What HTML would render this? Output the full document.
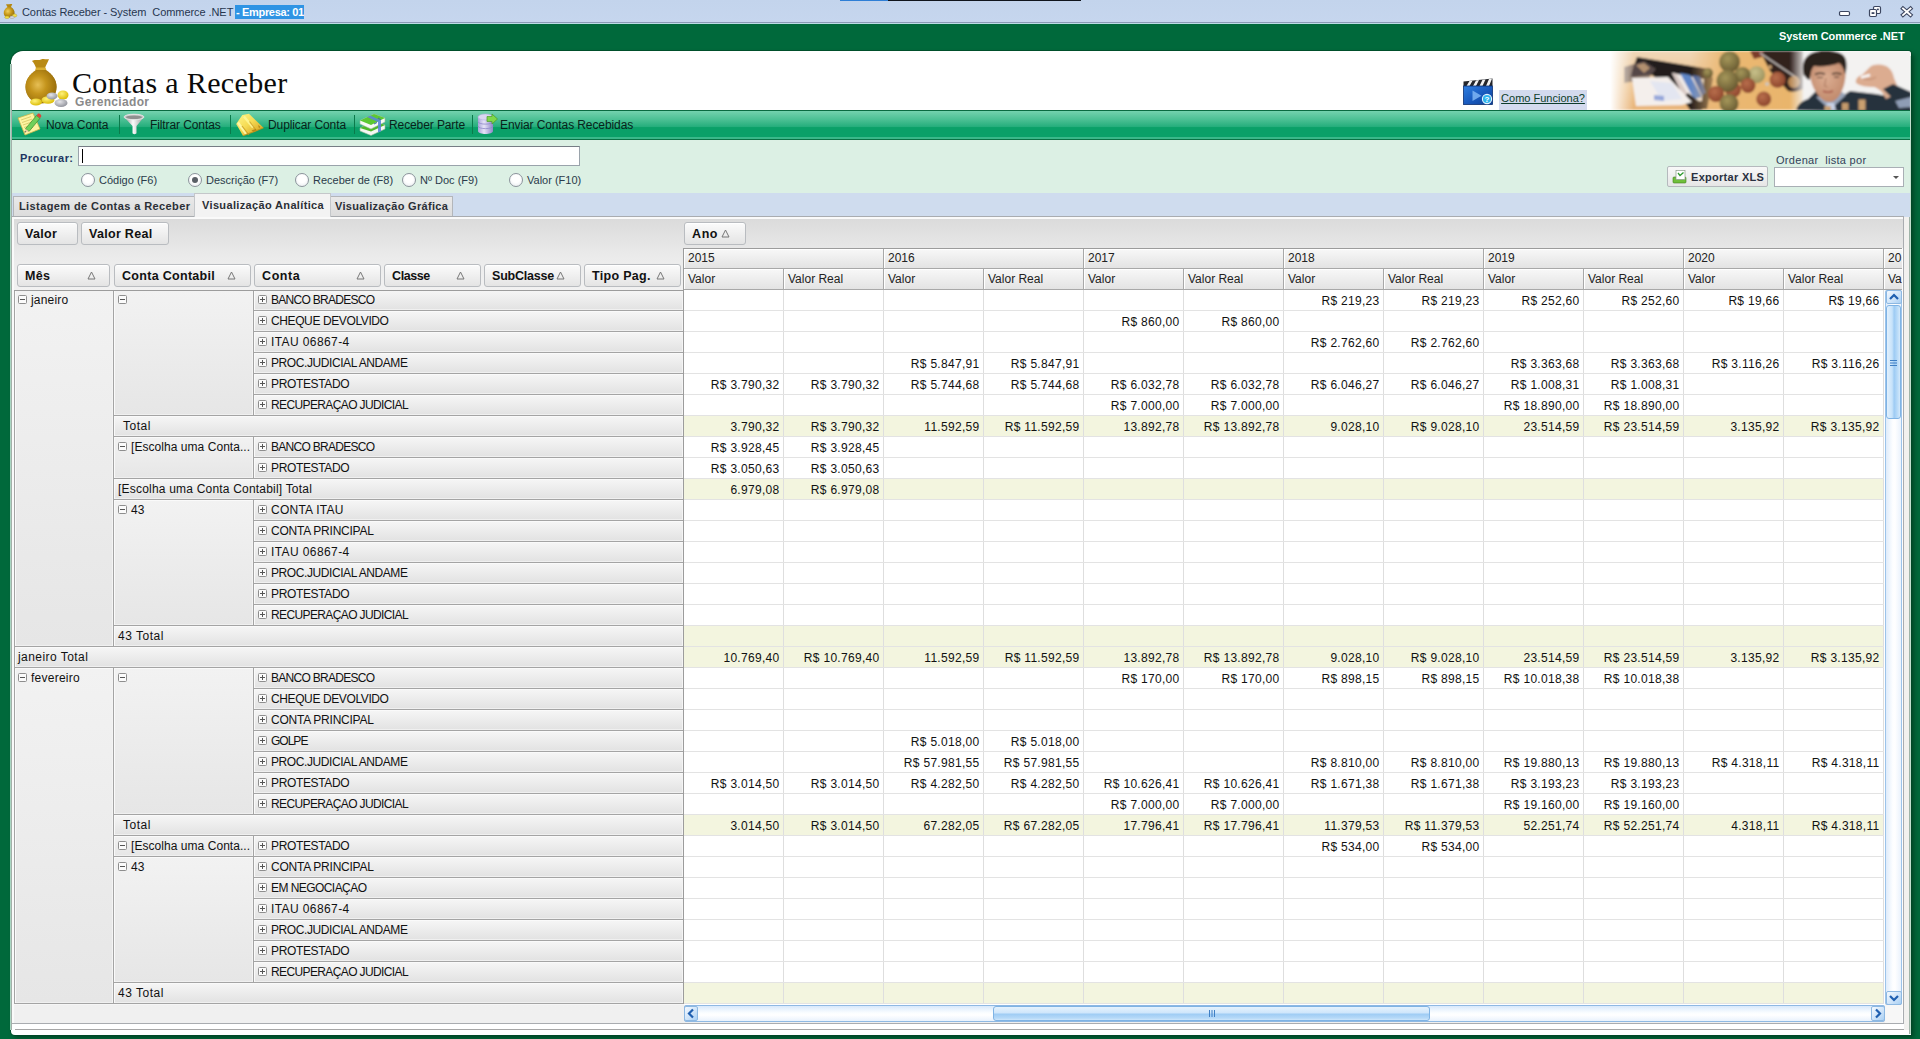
<!DOCTYPE html>
<html lang="pt-BR">
<head>
<meta charset="utf-8">
<title>Contas Receber - System Commerce .NET</title>
<style>
*{box-sizing:border-box;margin:0;padding:0}
html,body{width:1920px;height:1039px;overflow:hidden}
body{background:#00693b;font-family:"Liberation Sans",sans-serif;font-size:12px;color:#111;position:relative}
.abs{position:absolute}
#titlebar{position:absolute;left:0;top:0;width:1920px;height:24px;background:linear-gradient(#c3d4ec,#c6d6ee);border-bottom:1px solid #bcdde6;box-shadow:0 -1px 0 #8a9ab5 inset}
#titlebar .t{position:absolute;left:22px;top:5px;font-size:11px;line-height:14px;color:#27364f;white-space:pre;letter-spacing:-0.07px}
#titlebar .e{position:absolute;left:235px;top:5px;width:69px;height:14px;background:#2f94e4;color:#fff;font-weight:bold;font-size:11px;line-height:14px;white-space:pre;letter-spacing:-0.33px;padding-left:1px}
#brand{position:absolute;left:1779px;top:30px;letter-spacing:-0.08px;color:#fff;font-weight:bold;font-size:11px;white-space:pre}
#panel{position:absolute;left:11px;top:51px;width:1900px;height:984px;background:#fff;border-radius:12px 3px 0 4px;overflow:hidden}
#panelshadow{position:absolute;left:11px;top:51px;width:1900px;height:984px;border-radius:12px 3px 0 4px;box-shadow:0 0 0 1px rgba(0,70,38,.7),3px 3px 5px rgba(0,40,20,.55)}
/* everything inside panel uses page coordinates through this wrapper */
#in{position:absolute;left:-11px;top:-51px;width:1920px;height:1039px}
#h1{position:absolute;left:72px;top:65px;font-family:"Liberation Serif",serif;font-size:30px;line-height:36px;color:#0a0a0a;white-space:pre;letter-spacing:0.35px}
#h2{position:absolute;left:75px;top:95px;font-weight:bold;font-size:12px;line-height:14px;color:#8a8a8a;letter-spacing:0.33px}
#como{position:absolute;left:1499px;top:90px;width:88px;height:20px;background:#d3daee;color:#0d3d2a;font-size:11px;line-height:16px;text-align:center;text-decoration:underline;white-space:pre;letter-spacing:0}
#toolbar{position:absolute;left:11px;top:110px;width:1900px;height:30px;border-top:1px solid #0a6a40;border-bottom:1px solid #0a7245;background:linear-gradient(#74d2ae 0,#4cc094 30%,#22ad7a 58%,#0aa068 59%,#0aa068 92%,#3ab88a 93%,#3ab88a 100%)}
.tb{position:absolute;top:118px;font-size:12px;line-height:14px;color:#08231a;white-space:pre;letter-spacing:-0.1px}
.tsep{position:absolute;top:115px;width:1px;height:19px;background:#0b7a4b}
#search{position:absolute;left:11px;top:140px;width:1900px;height:53px;background:#dcf0e4}
#proc{position:absolute;left:20px;top:151px;font-weight:bold;font-size:11px;color:#1c3561;line-height:14px;letter-spacing:0.44px}
#inp{position:absolute;left:78px;top:146px;width:502px;height:20px;background:#fff;border:1px solid #9aa3ab;border-top-color:#767d85}
#inp i{position:absolute;left:3px;top:2px;width:1px;height:14px;background:#000}
.rad{position:absolute;top:173px;width:14px;height:14px;border-radius:50%;border:1px solid #8c949c;background:radial-gradient(circle at 50% 40%,#fff 40%,#e4e8ec)}
.rad.on::after{content:"";position:absolute;left:3px;top:3px;width:6px;height:6px;border-radius:50%;background:#5a5f66}
.rl{position:absolute;top:173px;font-size:11px;line-height:14px;color:#2a3a4a;white-space:pre;letter-spacing:0}
#exp{position:absolute;left:1667px;top:166px;width:101px;height:21px;border:1px solid #b5b9bd;border-radius:2px;background:linear-gradient(#f8f8f8,#e6e6e6)}
#exp span{position:absolute;left:23px;top:3px;font-weight:bold;font-size:11px;line-height:14px;color:#2a3040;white-space:pre;letter-spacing:0.29px}
#ord{position:absolute;left:1776px;top:153px;font-size:11px;line-height:14px;color:#33425a;white-space:pre;letter-spacing:0.3px}
#cmb{position:absolute;left:1774px;top:167px;width:130px;height:20px;background:#fff;border:1px solid #a9afb5}
#cmb::after{content:"";position:absolute;right:4px;top:8px;border:3px solid transparent;border-top:3px solid #555;border-bottom:0}
#tabs{position:absolute;left:11px;top:193px;width:1900px;height:25px;background:#cfdcee}
.tab{position:absolute;top:196px;height:20px;border:1px solid #b3b6ba;border-bottom:0;background:linear-gradient(#e9e9e9,#dcdcdc);font-weight:bold;font-size:11px;line-height:19px;color:#2b2f36;white-space:pre;padding-left:5px;letter-spacing:0.4px}
.tab.on{top:193px;height:24px;background:#f3f3f3;line-height:23px;border-color:#c4c7ca;z-index:2}
#pivot{position:absolute;left:11px;top:216px;width:1893px;height:808px;border:1px solid #a9acb0;box-shadow:2px 2px 0 #fafafa inset;background:linear-gradient(#dadada 0,#ebebeb 40px,#f2f2f2 75px,#f0f0f0 100%)}
.fb{position:absolute;height:23px;border:1px solid #b9bcc0;border-radius:3px;background:linear-gradient(#fbfbfb,#e4e4e4);box-shadow:0 1px 0 #fff inset;font-weight:bold;font-size:12.5px;line-height:22px;color:#111;padding-left:7px;white-space:pre;letter-spacing:0.3px}
.fb svg{position:absolute;top:6px}
/* row headers */
.rh{position:absolute;background:linear-gradient(#f2f2f2,#e6e6e6);border-left:1px solid #a4a4a4;border-bottom:1px solid #a4a4a4;box-shadow:1px 0 0 #fafafa inset,0 1px 0 #fafafa inset,-1px 0 0 #f4f4f4 inset,0 -1px 0 #f0f0f0 inset}
.rh.g{background:linear-gradient(#f6f6f6,#e2e2e2)}
.rh span{position:absolute;top:3px;font-size:12px;line-height:14px;white-space:pre;color:#111}
.pm{position:absolute}
/* data */
#gridbg{position:absolute;left:684px;top:290px;width:1201px;height:715px;background:#fff}
#grid{position:absolute;left:684px;top:290px;width:1200px;height:714px;
 background-image:linear-gradient(to bottom,transparent 20px,#e3e3e3 20px),linear-gradient(to right,transparent 99px,#dedede 99px);background-size:100px 21px}
.hl{position:absolute;left:684px;width:1200px;height:1px;background:#e3e3e3}
.vl{position:absolute;top:290px;width:1px;height:714px;background:#dedede}
.trow{position:absolute;left:684px;width:1200px;height:20px;background:#f3f5df}
.dc{position:absolute;width:100px;height:21px;font-size:12px;line-height:14px;padding-top:4px;text-align:right;padding-right:4.500px;white-space:pre;letter-spacing:0.3px;color:#111}
.ch{position:absolute;border-right:1px solid #a8a8a8;border-bottom:1px solid #a8a8a8;background:linear-gradient(#f8f8f8,#e3e3e3);box-shadow:1px 0 0 #fff inset,0 1px 0 #fff inset}
.ch span{position:absolute;left:4px;top:2px;font-size:12px;line-height:14px;color:#222}
/* scrollbars */
#vs{position:absolute;left:1885px;top:290px;width:17px;height:715px;background:linear-gradient(90deg,#dfecfb,#fdfeff 45%,#fff 60%,#eaf2fc);border:1px solid #9cc3ea;border-radius:2px}
#hs{position:absolute;left:684px;top:1005px;width:1201px;height:17px;background:linear-gradient(#d9e9fb,#fafdff 45%,#fff 60%,#e9f2fc);border:1px solid #8fb9e3;border-radius:2px}
.sbtn{position:absolute;background:linear-gradient(135deg,#f4f9ff,#cfe4f9 55%,#a9d0f4);border:1px solid #8db8e2;border-radius:2px}
.vth{position:absolute;left:1886px;top:305px;width:15px;height:114px;border:1px solid #7fb3e4;border-radius:3px;background:linear-gradient(90deg,#e3f1fd,#c6e2fa 40%,#9dcbf4 55%,#b9dbf8 80%,#d4e9fb)}
.hth{position:absolute;left:993px;top:1006px;width:437px;height:15px;border:1px solid #7fb3e4;border-radius:3px;background:linear-gradient(#e6f2fd,#cfe6fb 45%,#9fccf4 55%,#b5d9f8 85%,#cfe6fb)}
.vline{position:absolute;background:#9c9c9c}
</style>
</head>
<body>
<div id="titlebar">
  <svg class="abs" style="left:2px;top:3px" width="16" height="16" viewBox="0 0 16 16"><defs><radialGradient id="tbag" cx="38%" cy="40%" r="65%"><stop offset="0" stop-color="#f0d060"/><stop offset=".5" stop-color="#c89a1a"/><stop offset="1" stop-color="#96700c"/></radialGradient></defs><path d="M4 1.500c1.500-.8 2.500.2 3.500-.3s2 0 2.800-.2L9 4H5.500z" fill="#b48812"/><path d="M5.500 4h3.500c2.500 1.500 4 4 3.500 7-.4 2.600-2.500 3.500-5.300 3.500S2.200 13.500 1.800 11C1.300 8 3 5.500 5.500 4z" fill="url(#tbag)"/><ellipse cx="12.500" cy="12.500" rx="2.300" ry="1.600" fill="#f2e04a" stroke="#a88c10" stroke-width=".4"/><ellipse cx="10" cy="14.200" rx="2.300" ry="1.300" fill="#d8d8dc" stroke="#888" stroke-width=".4"/><ellipse cx="5" cy="14.300" rx="2.300" ry="1.200" fill="#f2e04a" stroke="#a88c10" stroke-width=".4"/></svg>
  <div class="t">Contas Receber - System  Commerce .NET</div>
  <div class="e">- Empresa: 01</div>
  <div class="abs" style="left:840px;top:0;width:48px;height:1px;background:#2f7fd6"></div>
  <div class="abs" style="left:888px;top:0;width:193px;height:1px;background:#10141c"></div>
  <svg class="abs" style="left:1836px;top:4px" width="80" height="16" viewBox="0 0 80 16"><g fill="#fff" stroke="#3c4660" stroke-width="1.200"><rect x="3.500" y="7.500" width="10" height="4" rx="1.200"/><rect x="37.500" y="2.500" width="7" height="7" rx="1.200"/><rect x="33.500" y="5.500" width="7" height="7" rx="1.200"/><rect x="35.600" y="8.200" width="2.800" height="1.800" fill="#3c4660" stroke="none"/><rect x="41" y="4.600" width="1.800" height="1.600" fill="#3c4660" stroke="none"/><path d="M67 4.500l7.500 6.500M74.500 4.500l-7.500 6.500" stroke-width="4" stroke-linecap="square" fill="none"/><path d="M67 4.500l7.500 6.500M74.500 4.500l-7.500 6.500" stroke="#fff" stroke-width="1.900" stroke-linecap="square" fill="none"/></g></svg>
</div>
<div id="brand">System Commerce .NET</div>
<div id="panelshadow"></div>
<div class="abs" style="left:10px;top:64px;width:1px;height:966px;background:#a9d6c2"></div>
<div id="panel"><div id="in">
  <!--HEADER-->
  <div id="h1">Contas a Receber</div>
  <div id="h2">Gerenciador</div>
  <div id="como">Como Funciona?</div>
  <svg class="abs" style="left:1600px;top:51px" width="311" height="59" viewBox="0 0 311 59">
    <defs>
      <filter id="bl1" x="-5%" y="-20%" width="110%" height="140%"><feGaussianBlur stdDeviation="1.100"/></filter>
      <filter id="bl2" x="-10%" y="-30%" width="120%" height="160%"><feGaussianBlur stdDeviation="3"/></filter>
      <linearGradient id="fadeL" x1="0" y1="0" x2="1" y2="0"><stop offset="0" stop-color="#fff" stop-opacity="1"/><stop offset=".3" stop-color="#fff" stop-opacity="1"/><stop offset="1" stop-color="#fff" stop-opacity="0"/></linearGradient>
      <linearGradient id="wood" x1="0" y1="0" x2="0" y2="1"><stop offset="0" stop-color="#f1d7b8"/><stop offset=".6" stop-color="#eec591"/><stop offset="1" stop-color="#e8b377"/></linearGradient>
      <linearGradient id="wood2f" x1="0" y1="0" x2="1" y2="0"><stop offset="0" stop-color="#eab873" stop-opacity="0"/><stop offset=".3" stop-color="#eab873" stop-opacity="1"/><stop offset="1" stop-color="#e9b46a" stop-opacity="1"/></linearGradient>
      <linearGradient id="manfade" x1="0" y1="0" x2="1" y2="0"><stop offset="0" stop-color="#f3f2f1" stop-opacity="0"/><stop offset="1" stop-color="#f3f2f1" stop-opacity="1"/></linearGradient>
      <radialGradient id="cn1" cx="40%" cy="35%" r="75%"><stop offset="0" stop-color="#a5975a"/><stop offset=".7" stop-color="#75673a"/><stop offset="1" stop-color="#5a4c26"/></radialGradient>
      <radialGradient id="cn3" cx="40%" cy="35%" r="75%"><stop offset="0" stop-color="#c8c08a"/><stop offset="1" stop-color="#968c58"/></radialGradient>
      <radialGradient id="cn2" cx="40%" cy="35%" r="75%"><stop offset="0" stop-color="#b86e4c"/><stop offset="1" stop-color="#863f28"/></radialGradient>
      <radialGradient id="skin" cx="45%" cy="40%" r="70%"><stop offset="0" stop-color="#dcae92"/><stop offset="1" stop-color="#bd8466"/></radialGradient>
    </defs>
    <g filter="url(#bl1)">
      <!-- wallet section -->
      <rect x="0" y="0" width="206" height="59" fill="url(#wood)"/>
      <path d="M37 6l72 12 4 10-6 30H96L52 24l-22 2z" fill="#241d1b"/>
      <path d="M24 16l20-6 12 8-8 10-24 4z" fill="#6a5a58" opacity=".7"/>
      <path d="M36 14l8-2 6 5-6 5z" fill="#c9a27a" opacity=".8"/>
      <path d="M72 22l32 6-2 22-14 2z" fill="#efe9e6"/>
      <path d="M80 22l10 2 12 22-8 2z" fill="#5f86c8"/><path d="M92 24l8 1.500 6 16-4 3z" fill="#3a5ea8"/>
      <path d="M72 22l4 .8 16 28-6 1z" fill="#d8c9c4"/>
      <path d="M88 42l16 12-2 5H90l-8-12z" fill="#221b19"/>
      <path d="M32 27l36-1 24 25-10 3-46 1z" fill="#f4efec"/>
      <path d="M50 30l22 2 10 16-20 2z" fill="#dfe4f2" opacity=".85"/>
      <path d="M54 44l10 1v5l-10-1z" fill="#7f96d6" opacity=".8"/>
      <!-- coins section -->
      <rect x="90" y="0" width="116" height="59" fill="url(#wood2f)"/>
      <path d="M160 0h48v34c-6 6-14 8-20 6L170 20z" fill="#33231f"/>
      <path d="M150 0h14l-2 6-8 2z" fill="#7a3a2a"/>
      <path d="M160 2l37 25" stroke="#d9d4d0" stroke-width="1.300" fill="none"/>
      <circle cx="170" cy="16" r="2" fill="#c9a070"/><circle cx="167" cy="33" r="1.800" fill="#c8c8c8"/>
      <circle cx="108" cy="22" r="5" fill="url(#cn1)"/>
      <circle cx="129.600" cy="10.800" r="10.500" fill="url(#cn1)"/>
      <circle cx="156.700" cy="23.700" r="8.500" fill="url(#cn3)"/>
      <circle cx="142.500" cy="24" r="8" fill="url(#cn1)"/>
      <circle cx="148" cy="34.500" r="7.500" fill="url(#cn2)"/>
      <circle cx="133" cy="38.700" r="8" fill="url(#cn2)"/>
      <circle cx="127.500" cy="30" r="11" fill="url(#cn1)"/>
      <circle cx="116" cy="43" r="8" fill="url(#cn2)"/>
      <circle cx="129" cy="52.400" r="9.500" fill="url(#cn1)"/>
      <circle cx="177.500" cy="28.800" r="8" fill="url(#cn2)"/>
      <circle cx="163.700" cy="48" r="7.500" fill="url(#cn2)"/>
      <circle cx="158" cy="47" r="3" fill="#9a4a30" opacity=".0"/>
      <circle cx="194" cy="31" r="6" fill="#d9a060" opacity=".8"/>
      <!-- man section -->
      <rect x="203" y="0" width="108" height="59" fill="#f3f2f1"/>
      <rect x="190" y="0" width="16" height="59" fill="url(#manfade)"/>
      <path d="M196 59c2-6 6-9 12-11l8-8 6 6 8 10 14-12 6-4 26 3 16 3 19-3v19z" fill="#27303c"/>
      <path d="M216 46l14 13 16-15-4-3z" fill="#98a4b8"/>
      <path d="M226 52l4 7h6l-2-7z" fill="#c8d2e6"/>
      <path d="M210 24c-1-10 2-12 8-13h22c4 2 6 6 5.500 14-.5 8-3 16-8 22-3 3-6 4-9 4s-8-3-12-9c-4-6-6-12-6.500-18z" fill="url(#skin)"/>
      <path d="M204 25C200 8 208 0 224 0c14 0 23 2 22.500 14 0 4-.5 8-1.500 9-1-5-3-9-6-11-7 3-18 4-25 3-2 2-3 5-3.500 9-.5 2-.5 4-1 5-2-1-4-2-4.500-4z" fill="#2c201c"/>
      <path d="M215 23.500c3-1.500 7-1.500 10-.5M232 23c3-1.200 6-1 9.500 0" stroke="#3a2a22" stroke-width="1.600" fill="none"/>
      <path d="M217 26.500h6M234 26h5" stroke="#4a352c" stroke-width="1"/>
      <path d="M226 27l-1.500 8 3 1" stroke="#a8745a" stroke-width="1" fill="none"/>
      <path d="M223 40c3 1.500 7 1.500 10 0" stroke="#a8584a" stroke-width="1.600" fill="none"/>
      <path d="M256 32c-1-4 2-7 6-8l8-8c4-3 10-3 16-1 4 2 7 6 8 12l6 14-14 7c-3-6-6-10-12-12-8 0-14-1-18-4z" fill="#dcac90"/>
      <path d="M262 27c4 2 10 2 14-1" stroke="#b98468" stroke-width="1" fill="none"/>
      <path d="M261 26.500l9-2.500" stroke="#fbfbfb" stroke-width="2.600"/>
      <path d="M292 44l14-4 5 2v14l-12 1z" fill="#8f9db5"/>
      <path d="M283 38l10-5 18 8v5l-16 4z" fill="#27303c"/>
      <rect x="224.500" y="55" width="6.500" height="4" fill="#caa274"/><rect x="242" y="52" width="6.500" height="7" fill="#c49a6c"/><rect x="258.500" y="48.500" width="7" height="10.500" fill="#c9a070"/>
    </g>
    <rect x="0" y="0" width="34" height="59" fill="url(#fadeL)"/>
  </svg>
  <div id="toolbar"></div>
  <!-- money bag -->
  <svg class="abs" style="left:24px;top:58px" width="48" height="50" viewBox="0 0 48 50">
    <defs>
      <radialGradient id="bagg" cx="40%" cy="45%" r="60%"><stop offset="0" stop-color="#e6bf55"/><stop offset=".45" stop-color="#c4941c"/><stop offset="1" stop-color="#9a6f0c"/></radialGradient>
      <radialGradient id="coing" cx="40%" cy="35%" r="70%"><stop offset="0" stop-color="#fff27a"/><stop offset="1" stop-color="#d9b800"/></radialGradient>
      <radialGradient id="silg" cx="40%" cy="35%" r="70%"><stop offset="0" stop-color="#e6e6ea"/><stop offset="1" stop-color="#8d8f98"/></radialGradient>
    </defs>
    <path d="M8 3c3-2 6 0 9-1.500s5 .5 8-.5c-1 3-3 6-4 9h-9c-1-3-2-5-4-7z" fill="#b98a14"/>
    <path d="M12 9.500h9.500l1 3h-11.500z" fill="#d9ae30"/>
    <ellipse cx="17" cy="29" rx="15.500" ry="16.500" fill="url(#bagg)"/>
    <path d="M12 12c-6 4-10.500 10-10.500 17 0 9 7 16 15.500 16s15.500-7 15.500-16c0-7-4.500-13-10.500-17z" fill="url(#bagg)"/>
    <ellipse cx="12" cy="44" rx="6" ry="3.500" fill="url(#coing)"/>
    <ellipse cx="24" cy="42" rx="6.500" ry="3.800" fill="url(#coing)"/>
    <ellipse cx="39" cy="37" rx="5.500" ry="4.500" fill="url(#coing)"/>
    <ellipse cx="28" cy="38" rx="5.500" ry="3.500" fill="url(#silg)"/>
    <ellipse cx="37" cy="45" rx="6.500" ry="4" fill="url(#silg)"/>
  </svg>
  <!-- video icon -->
  <svg class="abs" style="left:1463px;top:78px" width="31" height="27" viewBox="0 0 31 27">
    <defs><linearGradient id="vidg" x1="0" y1="0" x2="1" y2="1"><stop offset="0" stop-color="#2f7fe0"/><stop offset=".5" stop-color="#1a5cc0"/><stop offset="1" stop-color="#0d3f96"/></linearGradient></defs>
    <path d="M.5 3.500L29.500 .5v7.500H.5z" fill="#24262b"/>
    <path d="M3.500 8l3-5 3-.3-3 5.300zM10 8l3-5.600 3-.3L13 8zM16.500 8l3-6.200 3-.3L19.500 8zM23 8l3-6.900 3-.3L26 8z" fill="#f2f2f2"/>
    <rect x=".5" y="8" width="29" height="18.500" fill="url(#vidg)" stroke="#0b2f70" stroke-width=".8"/>
    <path d="M9.500 12.500l9 5.300-9 5.300z" fill="#7fb6f4" opacity=".85"/>
    <circle cx="24" cy="21" r="4.600" fill="#2fb4ee" stroke="#e4f4ff" stroke-width="1.100"/>
    <text x="24" y="24" font-family="Liberation Sans,sans-serif" font-size="8" font-weight="bold" fill="#fff" text-anchor="middle">?</text>
  </svg>
  <!-- nova conta -->
  <svg class="abs" style="left:17px;top:112px" width="27" height="26" viewBox="0 0 27 26">
    <path d="M1 6L16 1l7 16L8 23z" fill="#fdf4a0" stroke="#c9b84a" stroke-width=".8"/>
    <path d="M4 8l10-3.400M5 10.500l10-3.400M6 13l10-3.400M7 15.500l10-3.400M8 18l8-2.700" stroke="#d8c86a" stroke-width=".9"/>
    <path d="M19.500 3.500l3.500 2.800L12 19.500l-3.500-2.800z" fill="#6fd05a" stroke="#3a8a2a" stroke-width=".7"/>
    <path d="M19.500 3.500l1.400-1.700c1-1 4 1.300 3.300 2.700L23 6.300z" fill="#d8483a"/>
    <path d="M8.500 16.700L7.500 20.500 12 19.500z" fill="#e8d0a0"/><path d="M7.500 20.500l.4-1.600 1.400 1.200z" fill="#333"/>
  </svg>
  <!-- funnel -->
  <svg class="abs" style="left:123px;top:113px" width="23" height="22" viewBox="0 0 23 22">
    <defs><linearGradient id="fung" x1="0" y1="0" x2="1" y2="0"><stop offset="0" stop-color="#8e8e8e"/><stop offset=".45" stop-color="#fafafa"/><stop offset="1" stop-color="#9a9a9a"/></linearGradient></defs>
    <path d="M1 4c0-4 20-4 20 0L13.500 13v7c0 1.500-4 1.500-4 0v-7z" fill="url(#fung)"/>
    <ellipse cx="11" cy="4" rx="10" ry="2.800" fill="#c9c9c9" stroke="#e9e9e9" stroke-width=".8"/>
    <ellipse cx="11" cy="4.300" rx="8" ry="1.800" fill="#8f8f8f"/>
  </svg>
  <!-- gold bars -->
  <svg class="abs" style="left:235px;top:113px" width="30" height="24" viewBox="0 0 30 24">
    <defs><linearGradient id="goldg" x1="0" y1="0" x2="1" y2="1"><stop offset="0" stop-color="#fff78a"/><stop offset=".45" stop-color="#f6dc55"/><stop offset=".8" stop-color="#dcae2c"/><stop offset="1" stop-color="#c99a1c"/></linearGradient>
    <filter id="gbl"><feGaussianBlur stdDeviation=".45"/></filter></defs>
    <g filter="url(#gbl)">
    <path d="M1.200 11L7.300 2 14 .8 28.500 14.700 19.600 18.400 8 22.700z" fill="url(#goldg)"/>
    <path d="M3 9.500l8 11.500" stroke="#fffbb0" stroke-width="2.200" opacity=".85"/>
    <path d="M9 3.500l9 11" stroke="#fffa9c" stroke-width="2.400" opacity=".8"/>
    <path d="M7 13l7 9M14.500 8.500l6.500 8.500" stroke="#c8981e" stroke-width="1.200" opacity=".75"/>
    <path d="M16.500 17.500l4-1.500 1.500 1.500-3.500 1.500zM23 12l2.500 2-1.500 1z" fill="#a87a10" opacity=".8"/>
    <path d="M8 22.700l11.600-4.300 8.900-3.700" stroke="#c4941a" stroke-width="1.200" fill="none" opacity=".8"/>
    </g>
  </svg>
  <!-- money stack -->
  <svg class="abs" style="left:359px;top:113px" width="27" height="23" viewBox="0 0 27 23">
    <path d="M1 15l14-7 11 4v4l-14 6.500L1 18z" fill="#f4f8f2" stroke="#9ab89a" stroke-width=".6"/>
    <path d="M1 15l14-7 11 4-14 6.500z" fill="#4fb82a"/>
    <path d="M1 7.500l14-6.500 11 4v4L12 16 1 11z" fill="#f7faf5" stroke="#9ab89a" stroke-width=".6"/>
    <path d="M1 7.500l14-6.500 11 4L12 12z" fill="#5cc832"/>
    <path d="M8 4l11 5v10.500l3-1.300V7.500L11.500 2.600z" fill="#5a86d8" opacity=".9"/>
    <path d="M18 9.500l-3 1.500M19 5l3 2" stroke="#3a62b0" stroke-width="1"/>
  </svg>
  <!-- database arrow -->
  <svg class="abs" style="left:477px;top:113px" width="21" height="22" viewBox="0 0 21 22">
    <defs><linearGradient id="dbg" x1="0" y1="0" x2="1" y2="0"><stop offset="0" stop-color="#a9a4d8"/><stop offset=".4" stop-color="#e6e3f8"/><stop offset="1" stop-color="#8e88c8"/></linearGradient></defs>
    <path d="M1 4v14c0 4 15 4 15 0V4z" fill="url(#dbg)"/>
    <ellipse cx="8.500" cy="4" rx="7.500" ry="3" fill="#d9d6f2" stroke="#b5b0e0" stroke-width=".6"/>
    <path d="M1 8.500c0 3.500 15 3.500 15 0M1 13c0 3.500 15 3.500 15 0" fill="none" stroke="#8f89c9" stroke-width=".8"/>
    <path d="M10 3.500h5V1l5.500 5L15 11V8.500h-5z" fill="#7fd84a" stroke="#4a9a2a" stroke-width=".7"/>
  </svg>
  <div class="tb" style="left:46px">Nova Conta</div>
  <div class="tsep" style="left:119px"></div>
  <div class="tb" style="left:150px">Filtrar Contas</div>
  <div class="tsep" style="left:230px"></div>
  <div class="tb" style="left:268px">Duplicar Conta</div>
  <div class="tsep" style="left:354px"></div>
  <div class="tb" style="left:389px">Receber Parte</div>
  <div class="tsep" style="left:472px"></div>
  <div class="tb" style="left:500px">Enviar Contas Recebidas</div>

  <div id="search"></div>
  <div id="proc">Procurar:</div>
  <div id="inp"><i></i></div>
  <div class="rad" style="left:81px"></div><div class="rl" style="left:99px">Código (F6)</div>
  <div class="rad on" style="left:188px"></div><div class="rl" style="left:206px">Descrição (F7)</div>
  <div class="rad" style="left:295px"></div><div class="rl" style="left:313px">Receber de (F8)</div>
  <div class="rad" style="left:402px"></div><div class="rl" style="left:420px">Nº Doc (F9)</div>
  <div class="rad" style="left:509px"></div><div class="rl" style="left:527px">Valor (F10)</div>
  <div id="exp"><svg class="abs" style="left:4px;top:2px" width="16" height="16" viewBox="0 0 16 16"><rect x="1" y="8" width="13" height="6" rx="1" fill="#6fbf3a" stroke="#3c7d1c" stroke-width=".6"/><rect x="4" y="1.500" width="9" height="9" fill="#fff" stroke="#8a9a8a" stroke-width=".7"/><path d="M6 4l2 2.500 3.500-3" stroke="#2f9a2f" stroke-width="1.300" fill="none"/></svg><span>Exportar XLS</span></div>
  <div id="ord">Ordenar  lista por</div>
  <div id="cmb"></div>

  <div id="tabs"></div>
  <div class="tab" style="left:13px;width:182px">Listagem de Contas a Receber</div>
  <div class="tab on" style="left:194px;width:137px;padding-left:7px;letter-spacing:0.35px">Visualização Analítica</div>
  <div class="tab" style="left:330px;width:123px;padding-left:4px;letter-spacing:0.32px">Visualização Gráfica</div>

  <div id="pivot"></div>
  <div class="fb" style="left:17px;top:222px;width:61px">Valor</div>
  <div class="fb" style="left:81px;top:222px;width:88px">Valor Real</div>
  <div class="fb" style="left:684px;top:222px;width:62px;letter-spacing:0.6px">Ano<svg style="left:36px" width="9" height="9" viewBox="0 0 9 9"><path d="M4.500 1L8 8H1z" fill="none" stroke="#777" stroke-width="1"/></svg></div>
  <div class="fb" style="left:17px;top:264px;width:93px">Mês<svg style="left:69px" width="9" height="9" viewBox="0 0 9 9"><path d="M4.500 1L8 8H1z" fill="none" stroke="#777" stroke-width="1"/></svg></div>
  <div class="fb" style="left:114px;top:264px;width:137px">Conta Contabil<svg style="left:112px" width="9" height="9" viewBox="0 0 9 9"><path d="M4.500 1L8 8H1z" fill="none" stroke="#777" stroke-width="1"/></svg></div>
  <div class="fb" style="left:254px;top:264px;width:127px;letter-spacing:0.6px">Conta<svg style="left:101px" width="9" height="9" viewBox="0 0 9 9"><path d="M4.500 1L8 8H1z" fill="none" stroke="#777" stroke-width="1"/></svg></div>
  <div class="fb" style="left:384px;top:264px;width:97px;letter-spacing:-0.4px">Classe<svg style="left:71px" width="9" height="9" viewBox="0 0 9 9"><path d="M4.500 1L8 8H1z" fill="none" stroke="#777" stroke-width="1"/></svg></div>
  <div class="fb" style="left:484px;top:264px;width:97px;letter-spacing:-0.2px">SubClasse<svg style="left:71px" width="9" height="9" viewBox="0 0 9 9"><path d="M4.500 1L8 8H1z" fill="none" stroke="#777" stroke-width="1"/></svg></div>
  <div class="fb" style="left:584px;top:264px;width:97px">Tipo Pag.<svg style="left:71px" width="9" height="9" viewBox="0 0 9 9"><path d="M4.500 1L8 8H1z" fill="none" stroke="#777" stroke-width="1"/></svg></div>

  <div class="ch" style="left:684px;top:249px;width:200px;height:20px"><span style="top:1.500px">2015</span></div>
<div class="ch" style="left:684px;top:269px;width:100px;height:21px"><span style="top:2.500px">Valor</span></div>
<div class="ch" style="left:784px;top:269px;width:100px;height:21px"><span style="top:2.500px">Valor Real</span></div>
<div class="ch" style="left:884px;top:249px;width:200px;height:20px"><span style="top:1.500px">2016</span></div>
<div class="ch" style="left:884px;top:269px;width:100px;height:21px"><span style="top:2.500px">Valor</span></div>
<div class="ch" style="left:984px;top:269px;width:100px;height:21px"><span style="top:2.500px">Valor Real</span></div>
<div class="ch" style="left:1084px;top:249px;width:200px;height:20px"><span style="top:1.500px">2017</span></div>
<div class="ch" style="left:1084px;top:269px;width:100px;height:21px"><span style="top:2.500px">Valor</span></div>
<div class="ch" style="left:1184px;top:269px;width:100px;height:21px"><span style="top:2.500px">Valor Real</span></div>
<div class="ch" style="left:1284px;top:249px;width:200px;height:20px"><span style="top:1.500px">2018</span></div>
<div class="ch" style="left:1284px;top:269px;width:100px;height:21px"><span style="top:2.500px">Valor</span></div>
<div class="ch" style="left:1384px;top:269px;width:100px;height:21px"><span style="top:2.500px">Valor Real</span></div>
<div class="ch" style="left:1484px;top:249px;width:200px;height:20px"><span style="top:1.500px">2019</span></div>
<div class="ch" style="left:1484px;top:269px;width:100px;height:21px"><span style="top:2.500px">Valor</span></div>
<div class="ch" style="left:1584px;top:269px;width:100px;height:21px"><span style="top:2.500px">Valor Real</span></div>
<div class="ch" style="left:1684px;top:249px;width:200px;height:20px"><span style="top:1.500px">2020</span></div>
<div class="ch" style="left:1684px;top:269px;width:100px;height:21px"><span style="top:2.500px">Valor</span></div>
<div class="ch" style="left:1784px;top:269px;width:100px;height:21px"><span style="top:2.500px">Valor Real</span></div>
<div class="ch" style="left:1884px;top:249px;width:19px;height:20px;border-right:0"><span style="top:1.500px">20</span></div>
<div class="ch" style="left:1884px;top:269px;width:19px;height:21px;border-right:0"><span style="top:2.500px">Va</span></div>
  <div id="gridbg"></div>
  <div class="trow" style="top:416px"></div>
<div class="trow" style="top:479px"></div>
<div class="trow" style="top:626px"></div>
<div class="trow" style="top:647px"></div>
<div class="trow" style="top:815px"></div>
<div class="trow" style="top:983px"></div>
  <div id="grid"></div>
  <div class="dc" style="left:1284px;top:290px">R$ 219,23</div>
<div class="dc" style="left:1384px;top:290px">R$ 219,23</div>
<div class="dc" style="left:1484px;top:290px">R$ 252,60</div>
<div class="dc" style="left:1584px;top:290px">R$ 252,60</div>
<div class="dc" style="left:1684px;top:290px">R$ 19,66</div>
<div class="dc" style="left:1784px;top:290px">R$ 19,66</div>
<div class="dc" style="left:1084px;top:311px">R$ 860,00</div>
<div class="dc" style="left:1184px;top:311px">R$ 860,00</div>
<div class="dc" style="left:1284px;top:332px">R$ 2.762,60</div>
<div class="dc" style="left:1384px;top:332px">R$ 2.762,60</div>
<div class="dc" style="left:884px;top:353px">R$ 5.847,91</div>
<div class="dc" style="left:984px;top:353px">R$ 5.847,91</div>
<div class="dc" style="left:1484px;top:353px">R$ 3.363,68</div>
<div class="dc" style="left:1584px;top:353px">R$ 3.363,68</div>
<div class="dc" style="left:1684px;top:353px">R$ 3.116,26</div>
<div class="dc" style="left:1784px;top:353px">R$ 3.116,26</div>
<div class="dc" style="left:684px;top:374px">R$ 3.790,32</div>
<div class="dc" style="left:784px;top:374px">R$ 3.790,32</div>
<div class="dc" style="left:884px;top:374px">R$ 5.744,68</div>
<div class="dc" style="left:984px;top:374px">R$ 5.744,68</div>
<div class="dc" style="left:1084px;top:374px">R$ 6.032,78</div>
<div class="dc" style="left:1184px;top:374px">R$ 6.032,78</div>
<div class="dc" style="left:1284px;top:374px">R$ 6.046,27</div>
<div class="dc" style="left:1384px;top:374px">R$ 6.046,27</div>
<div class="dc" style="left:1484px;top:374px">R$ 1.008,31</div>
<div class="dc" style="left:1584px;top:374px">R$ 1.008,31</div>
<div class="dc" style="left:1084px;top:395px">R$ 7.000,00</div>
<div class="dc" style="left:1184px;top:395px">R$ 7.000,00</div>
<div class="dc" style="left:1484px;top:395px">R$ 18.890,00</div>
<div class="dc" style="left:1584px;top:395px">R$ 18.890,00</div>
<div class="dc" style="left:684px;top:416px">3.790,32</div>
<div class="dc" style="left:784px;top:416px">R$ 3.790,32</div>
<div class="dc" style="left:884px;top:416px">11.592,59</div>
<div class="dc" style="left:984px;top:416px">R$ 11.592,59</div>
<div class="dc" style="left:1084px;top:416px">13.892,78</div>
<div class="dc" style="left:1184px;top:416px">R$ 13.892,78</div>
<div class="dc" style="left:1284px;top:416px">9.028,10</div>
<div class="dc" style="left:1384px;top:416px">R$ 9.028,10</div>
<div class="dc" style="left:1484px;top:416px">23.514,59</div>
<div class="dc" style="left:1584px;top:416px">R$ 23.514,59</div>
<div class="dc" style="left:1684px;top:416px">3.135,92</div>
<div class="dc" style="left:1784px;top:416px">R$ 3.135,92</div>
<div class="dc" style="left:684px;top:437px">R$ 3.928,45</div>
<div class="dc" style="left:784px;top:437px">R$ 3.928,45</div>
<div class="dc" style="left:684px;top:458px">R$ 3.050,63</div>
<div class="dc" style="left:784px;top:458px">R$ 3.050,63</div>
<div class="dc" style="left:684px;top:479px">6.979,08</div>
<div class="dc" style="left:784px;top:479px">R$ 6.979,08</div>
<div class="dc" style="left:684px;top:647px">10.769,40</div>
<div class="dc" style="left:784px;top:647px">R$ 10.769,40</div>
<div class="dc" style="left:884px;top:647px">11.592,59</div>
<div class="dc" style="left:984px;top:647px">R$ 11.592,59</div>
<div class="dc" style="left:1084px;top:647px">13.892,78</div>
<div class="dc" style="left:1184px;top:647px">R$ 13.892,78</div>
<div class="dc" style="left:1284px;top:647px">9.028,10</div>
<div class="dc" style="left:1384px;top:647px">R$ 9.028,10</div>
<div class="dc" style="left:1484px;top:647px">23.514,59</div>
<div class="dc" style="left:1584px;top:647px">R$ 23.514,59</div>
<div class="dc" style="left:1684px;top:647px">3.135,92</div>
<div class="dc" style="left:1784px;top:647px">R$ 3.135,92</div>
<div class="dc" style="left:1084px;top:668px">R$ 170,00</div>
<div class="dc" style="left:1184px;top:668px">R$ 170,00</div>
<div class="dc" style="left:1284px;top:668px">R$ 898,15</div>
<div class="dc" style="left:1384px;top:668px">R$ 898,15</div>
<div class="dc" style="left:1484px;top:668px">R$ 10.018,38</div>
<div class="dc" style="left:1584px;top:668px">R$ 10.018,38</div>
<div class="dc" style="left:884px;top:731px">R$ 5.018,00</div>
<div class="dc" style="left:984px;top:731px">R$ 5.018,00</div>
<div class="dc" style="left:884px;top:752px">R$ 57.981,55</div>
<div class="dc" style="left:984px;top:752px">R$ 57.981,55</div>
<div class="dc" style="left:1284px;top:752px">R$ 8.810,00</div>
<div class="dc" style="left:1384px;top:752px">R$ 8.810,00</div>
<div class="dc" style="left:1484px;top:752px">R$ 19.880,13</div>
<div class="dc" style="left:1584px;top:752px">R$ 19.880,13</div>
<div class="dc" style="left:1684px;top:752px">R$ 4.318,11</div>
<div class="dc" style="left:1784px;top:752px">R$ 4.318,11</div>
<div class="dc" style="left:684px;top:773px">R$ 3.014,50</div>
<div class="dc" style="left:784px;top:773px">R$ 3.014,50</div>
<div class="dc" style="left:884px;top:773px">R$ 4.282,50</div>
<div class="dc" style="left:984px;top:773px">R$ 4.282,50</div>
<div class="dc" style="left:1084px;top:773px">R$ 10.626,41</div>
<div class="dc" style="left:1184px;top:773px">R$ 10.626,41</div>
<div class="dc" style="left:1284px;top:773px">R$ 1.671,38</div>
<div class="dc" style="left:1384px;top:773px">R$ 1.671,38</div>
<div class="dc" style="left:1484px;top:773px">R$ 3.193,23</div>
<div class="dc" style="left:1584px;top:773px">R$ 3.193,23</div>
<div class="dc" style="left:1084px;top:794px">R$ 7.000,00</div>
<div class="dc" style="left:1184px;top:794px">R$ 7.000,00</div>
<div class="dc" style="left:1484px;top:794px">R$ 19.160,00</div>
<div class="dc" style="left:1584px;top:794px">R$ 19.160,00</div>
<div class="dc" style="left:684px;top:815px">3.014,50</div>
<div class="dc" style="left:784px;top:815px">R$ 3.014,50</div>
<div class="dc" style="left:884px;top:815px">67.282,05</div>
<div class="dc" style="left:984px;top:815px">R$ 67.282,05</div>
<div class="dc" style="left:1084px;top:815px">17.796,41</div>
<div class="dc" style="left:1184px;top:815px">R$ 17.796,41</div>
<div class="dc" style="left:1284px;top:815px">11.379,53</div>
<div class="dc" style="left:1384px;top:815px">R$ 11.379,53</div>
<div class="dc" style="left:1484px;top:815px">52.251,74</div>
<div class="dc" style="left:1584px;top:815px">R$ 52.251,74</div>
<div class="dc" style="left:1684px;top:815px">4.318,11</div>
<div class="dc" style="left:1784px;top:815px">R$ 4.318,11</div>
<div class="dc" style="left:1284px;top:836px">R$ 534,00</div>
<div class="dc" style="left:1384px;top:836px">R$ 534,00</div>
  <div class="rh" style="left:14px;top:290px;width:99px;height:357px"><svg class="pm" style="left:3px;top:5px" width="9" height="9" viewBox="0 0 9 9"><rect x="0.5" y="0.5" width="8" height="8" rx="1" fill="#fbfbfb" stroke="#8e8e8e"/><path d="M2 4.5H7" stroke="#555" stroke-width="1"/></svg><span style="left:16px;letter-spacing:0.18px;">janeiro</span></div>
<div class="rh" style="left:14px;top:668px;width:99px;height:336px"><svg class="pm" style="left:3px;top:5px" width="9" height="9" viewBox="0 0 9 9"><rect x="0.5" y="0.5" width="8" height="8" rx="1" fill="#fbfbfb" stroke="#8e8e8e"/><path d="M2 4.5H7" stroke="#555" stroke-width="1"/></svg><span style="left:16px;letter-spacing:0.24px;">fevereiro</span></div>
<div class="rh" style="left:113px;top:290px;width:140px;height:126px"><svg class="pm" style="left:4px;top:5px" width="9" height="9" viewBox="0 0 9 9"><rect x="0.5" y="0.5" width="8" height="8" rx="1" fill="#fbfbfb" stroke="#8e8e8e"/><path d="M2 4.5H7" stroke="#555" stroke-width="1"/></svg><span style="left:17px;"></span></div>
<div class="rh" style="left:113px;top:437px;width:140px;height:42px"><svg class="pm" style="left:4px;top:5px" width="9" height="9" viewBox="0 0 9 9"><rect x="0.5" y="0.5" width="8" height="8" rx="1" fill="#fbfbfb" stroke="#8e8e8e"/><path d="M2 4.5H7" stroke="#555" stroke-width="1"/></svg><span style="left:17px;letter-spacing:0.05px;">[Escolha uma Conta...</span></div>
<div class="rh" style="left:113px;top:500px;width:140px;height:126px"><svg class="pm" style="left:4px;top:5px" width="9" height="9" viewBox="0 0 9 9"><rect x="0.5" y="0.5" width="8" height="8" rx="1" fill="#fbfbfb" stroke="#8e8e8e"/><path d="M2 4.5H7" stroke="#555" stroke-width="1"/></svg><span style="left:17px;letter-spacing:0.2px;">43</span></div>
<div class="rh" style="left:113px;top:668px;width:140px;height:147px"><svg class="pm" style="left:4px;top:5px" width="9" height="9" viewBox="0 0 9 9"><rect x="0.5" y="0.5" width="8" height="8" rx="1" fill="#fbfbfb" stroke="#8e8e8e"/><path d="M2 4.5H7" stroke="#555" stroke-width="1"/></svg><span style="left:17px;"></span></div>
<div class="rh" style="left:113px;top:836px;width:140px;height:21px"><svg class="pm" style="left:4px;top:5px" width="9" height="9" viewBox="0 0 9 9"><rect x="0.5" y="0.5" width="8" height="8" rx="1" fill="#fbfbfb" stroke="#8e8e8e"/><path d="M2 4.5H7" stroke="#555" stroke-width="1"/></svg><span style="left:17px;letter-spacing:0.05px;">[Escolha uma Conta...</span></div>
<div class="rh" style="left:113px;top:857px;width:140px;height:126px"><svg class="pm" style="left:4px;top:5px" width="9" height="9" viewBox="0 0 9 9"><rect x="0.5" y="0.5" width="8" height="8" rx="1" fill="#fbfbfb" stroke="#8e8e8e"/><path d="M2 4.5H7" stroke="#555" stroke-width="1"/></svg><span style="left:17px;letter-spacing:0.2px;">43</span></div>
<div class="rh g" style="left:253px;top:290px;width:430px;height:21px"><svg class="pm" style="left:4px;top:5px" width="9" height="9" viewBox="0 0 9 9"><rect x="0.5" y="0.5" width="8" height="8" rx="1" fill="#fbfbfb" stroke="#8e8e8e"/><path d="M2 4.5H7M4.5 2V7" stroke="#555" stroke-width="1"/></svg><span style="left:17px;letter-spacing:-0.72px;">BANCO BRADESCO</span></div>
<div class="rh g" style="left:253px;top:311px;width:430px;height:21px"><svg class="pm" style="left:4px;top:5px" width="9" height="9" viewBox="0 0 9 9"><rect x="0.5" y="0.5" width="8" height="8" rx="1" fill="#fbfbfb" stroke="#8e8e8e"/><path d="M2 4.5H7M4.5 2V7" stroke="#555" stroke-width="1"/></svg><span style="left:17px;letter-spacing:-0.39px;">CHEQUE DEVOLVIDO</span></div>
<div class="rh g" style="left:253px;top:332px;width:430px;height:21px"><svg class="pm" style="left:4px;top:5px" width="9" height="9" viewBox="0 0 9 9"><rect x="0.5" y="0.5" width="8" height="8" rx="1" fill="#fbfbfb" stroke="#8e8e8e"/><path d="M2 4.5H7M4.5 2V7" stroke="#555" stroke-width="1"/></svg><span style="left:17px;letter-spacing:0.4px;">ITAU 06867-4</span></div>
<div class="rh g" style="left:253px;top:353px;width:430px;height:21px"><svg class="pm" style="left:4px;top:5px" width="9" height="9" viewBox="0 0 9 9"><rect x="0.5" y="0.5" width="8" height="8" rx="1" fill="#fbfbfb" stroke="#8e8e8e"/><path d="M2 4.5H7M4.5 2V7" stroke="#555" stroke-width="1"/></svg><span style="left:17px;letter-spacing:-0.42px;">PROC.JUDICIAL ANDAME</span></div>
<div class="rh g" style="left:253px;top:374px;width:430px;height:21px"><svg class="pm" style="left:4px;top:5px" width="9" height="9" viewBox="0 0 9 9"><rect x="0.5" y="0.5" width="8" height="8" rx="1" fill="#fbfbfb" stroke="#8e8e8e"/><path d="M2 4.5H7M4.5 2V7" stroke="#555" stroke-width="1"/></svg><span style="left:17px;letter-spacing:-0.35px;">PROTESTADO</span></div>
<div class="rh g" style="left:253px;top:395px;width:430px;height:21px"><svg class="pm" style="left:4px;top:5px" width="9" height="9" viewBox="0 0 9 9"><rect x="0.5" y="0.5" width="8" height="8" rx="1" fill="#fbfbfb" stroke="#8e8e8e"/><path d="M2 4.5H7M4.5 2V7" stroke="#555" stroke-width="1"/></svg><span style="left:17px;letter-spacing:-0.62px;">RECUPERAÇAO JUDICIAL</span></div>
<div class="rh g" style="left:113px;top:416px;width:570px;height:21px"><span style="left:9px;letter-spacing:0.5px;">Total</span></div>
<div class="rh g" style="left:253px;top:437px;width:430px;height:21px"><svg class="pm" style="left:4px;top:5px" width="9" height="9" viewBox="0 0 9 9"><rect x="0.5" y="0.5" width="8" height="8" rx="1" fill="#fbfbfb" stroke="#8e8e8e"/><path d="M2 4.5H7M4.5 2V7" stroke="#555" stroke-width="1"/></svg><span style="left:17px;letter-spacing:-0.72px;">BANCO BRADESCO</span></div>
<div class="rh g" style="left:253px;top:458px;width:430px;height:21px"><svg class="pm" style="left:4px;top:5px" width="9" height="9" viewBox="0 0 9 9"><rect x="0.5" y="0.5" width="8" height="8" rx="1" fill="#fbfbfb" stroke="#8e8e8e"/><path d="M2 4.5H7M4.5 2V7" stroke="#555" stroke-width="1"/></svg><span style="left:17px;letter-spacing:-0.35px;">PROTESTADO</span></div>
<div class="rh g" style="left:113px;top:479px;width:570px;height:21px"><span style="left:4px;letter-spacing:0.2px;">[Escolha uma Conta Contabil] Total</span></div>
<div class="rh g" style="left:253px;top:500px;width:430px;height:21px"><svg class="pm" style="left:4px;top:5px" width="9" height="9" viewBox="0 0 9 9"><rect x="0.5" y="0.5" width="8" height="8" rx="1" fill="#fbfbfb" stroke="#8e8e8e"/><path d="M2 4.5H7M4.5 2V7" stroke="#555" stroke-width="1"/></svg><span style="left:17px;letter-spacing:0.24px;">CONTA ITAU</span></div>
<div class="rh g" style="left:253px;top:521px;width:430px;height:21px"><svg class="pm" style="left:4px;top:5px" width="9" height="9" viewBox="0 0 9 9"><rect x="0.5" y="0.5" width="8" height="8" rx="1" fill="#fbfbfb" stroke="#8e8e8e"/><path d="M2 4.5H7M4.5 2V7" stroke="#555" stroke-width="1"/></svg><span style="left:17px;letter-spacing:-0.24px;">CONTA PRINCIPAL</span></div>
<div class="rh g" style="left:253px;top:542px;width:430px;height:21px"><svg class="pm" style="left:4px;top:5px" width="9" height="9" viewBox="0 0 9 9"><rect x="0.5" y="0.5" width="8" height="8" rx="1" fill="#fbfbfb" stroke="#8e8e8e"/><path d="M2 4.5H7M4.5 2V7" stroke="#555" stroke-width="1"/></svg><span style="left:17px;letter-spacing:0.4px;">ITAU 06867-4</span></div>
<div class="rh g" style="left:253px;top:563px;width:430px;height:21px"><svg class="pm" style="left:4px;top:5px" width="9" height="9" viewBox="0 0 9 9"><rect x="0.5" y="0.5" width="8" height="8" rx="1" fill="#fbfbfb" stroke="#8e8e8e"/><path d="M2 4.5H7M4.5 2V7" stroke="#555" stroke-width="1"/></svg><span style="left:17px;letter-spacing:-0.42px;">PROC.JUDICIAL ANDAME</span></div>
<div class="rh g" style="left:253px;top:584px;width:430px;height:21px"><svg class="pm" style="left:4px;top:5px" width="9" height="9" viewBox="0 0 9 9"><rect x="0.5" y="0.5" width="8" height="8" rx="1" fill="#fbfbfb" stroke="#8e8e8e"/><path d="M2 4.5H7M4.5 2V7" stroke="#555" stroke-width="1"/></svg><span style="left:17px;letter-spacing:-0.35px;">PROTESTADO</span></div>
<div class="rh g" style="left:253px;top:605px;width:430px;height:21px"><svg class="pm" style="left:4px;top:5px" width="9" height="9" viewBox="0 0 9 9"><rect x="0.5" y="0.5" width="8" height="8" rx="1" fill="#fbfbfb" stroke="#8e8e8e"/><path d="M2 4.5H7M4.5 2V7" stroke="#555" stroke-width="1"/></svg><span style="left:17px;letter-spacing:-0.62px;">RECUPERAÇAO JUDICIAL</span></div>
<div class="rh g" style="left:113px;top:626px;width:570px;height:21px"><span style="left:4px;letter-spacing:0.5px;">43 Total</span></div>
<div class="rh g" style="left:14px;top:647px;width:669px;height:21px"><span style="left:3px;letter-spacing:0.45px;">janeiro Total</span></div>
<div class="rh g" style="left:253px;top:668px;width:430px;height:21px"><svg class="pm" style="left:4px;top:5px" width="9" height="9" viewBox="0 0 9 9"><rect x="0.5" y="0.5" width="8" height="8" rx="1" fill="#fbfbfb" stroke="#8e8e8e"/><path d="M2 4.5H7M4.5 2V7" stroke="#555" stroke-width="1"/></svg><span style="left:17px;letter-spacing:-0.72px;">BANCO BRADESCO</span></div>
<div class="rh g" style="left:253px;top:689px;width:430px;height:21px"><svg class="pm" style="left:4px;top:5px" width="9" height="9" viewBox="0 0 9 9"><rect x="0.5" y="0.5" width="8" height="8" rx="1" fill="#fbfbfb" stroke="#8e8e8e"/><path d="M2 4.5H7M4.5 2V7" stroke="#555" stroke-width="1"/></svg><span style="left:17px;letter-spacing:-0.39px;">CHEQUE DEVOLVIDO</span></div>
<div class="rh g" style="left:253px;top:710px;width:430px;height:21px"><svg class="pm" style="left:4px;top:5px" width="9" height="9" viewBox="0 0 9 9"><rect x="0.5" y="0.5" width="8" height="8" rx="1" fill="#fbfbfb" stroke="#8e8e8e"/><path d="M2 4.5H7M4.5 2V7" stroke="#555" stroke-width="1"/></svg><span style="left:17px;letter-spacing:-0.24px;">CONTA PRINCIPAL</span></div>
<div class="rh g" style="left:253px;top:731px;width:430px;height:21px"><svg class="pm" style="left:4px;top:5px" width="9" height="9" viewBox="0 0 9 9"><rect x="0.5" y="0.5" width="8" height="8" rx="1" fill="#fbfbfb" stroke="#8e8e8e"/><path d="M2 4.5H7M4.5 2V7" stroke="#555" stroke-width="1"/></svg><span style="left:17px;letter-spacing:-0.99px;">GOLPE</span></div>
<div class="rh g" style="left:253px;top:752px;width:430px;height:21px"><svg class="pm" style="left:4px;top:5px" width="9" height="9" viewBox="0 0 9 9"><rect x="0.5" y="0.5" width="8" height="8" rx="1" fill="#fbfbfb" stroke="#8e8e8e"/><path d="M2 4.5H7M4.5 2V7" stroke="#555" stroke-width="1"/></svg><span style="left:17px;letter-spacing:-0.42px;">PROC.JUDICIAL ANDAME</span></div>
<div class="rh g" style="left:253px;top:773px;width:430px;height:21px"><svg class="pm" style="left:4px;top:5px" width="9" height="9" viewBox="0 0 9 9"><rect x="0.5" y="0.5" width="8" height="8" rx="1" fill="#fbfbfb" stroke="#8e8e8e"/><path d="M2 4.5H7M4.5 2V7" stroke="#555" stroke-width="1"/></svg><span style="left:17px;letter-spacing:-0.35px;">PROTESTADO</span></div>
<div class="rh g" style="left:253px;top:794px;width:430px;height:21px"><svg class="pm" style="left:4px;top:5px" width="9" height="9" viewBox="0 0 9 9"><rect x="0.5" y="0.5" width="8" height="8" rx="1" fill="#fbfbfb" stroke="#8e8e8e"/><path d="M2 4.5H7M4.5 2V7" stroke="#555" stroke-width="1"/></svg><span style="left:17px;letter-spacing:-0.62px;">RECUPERAÇAO JUDICIAL</span></div>
<div class="rh g" style="left:113px;top:815px;width:570px;height:21px"><span style="left:9px;letter-spacing:0.5px;">Total</span></div>
<div class="rh g" style="left:253px;top:836px;width:430px;height:21px"><svg class="pm" style="left:4px;top:5px" width="9" height="9" viewBox="0 0 9 9"><rect x="0.5" y="0.5" width="8" height="8" rx="1" fill="#fbfbfb" stroke="#8e8e8e"/><path d="M2 4.5H7M4.5 2V7" stroke="#555" stroke-width="1"/></svg><span style="left:17px;letter-spacing:-0.35px;">PROTESTADO</span></div>
<div class="rh g" style="left:253px;top:857px;width:430px;height:21px"><svg class="pm" style="left:4px;top:5px" width="9" height="9" viewBox="0 0 9 9"><rect x="0.5" y="0.5" width="8" height="8" rx="1" fill="#fbfbfb" stroke="#8e8e8e"/><path d="M2 4.5H7M4.5 2V7" stroke="#555" stroke-width="1"/></svg><span style="left:17px;letter-spacing:-0.24px;">CONTA PRINCIPAL</span></div>
<div class="rh g" style="left:253px;top:878px;width:430px;height:21px"><svg class="pm" style="left:4px;top:5px" width="9" height="9" viewBox="0 0 9 9"><rect x="0.5" y="0.5" width="8" height="8" rx="1" fill="#fbfbfb" stroke="#8e8e8e"/><path d="M2 4.5H7M4.5 2V7" stroke="#555" stroke-width="1"/></svg><span style="left:17px;letter-spacing:-0.56px;">EM NEGOCIAÇAO</span></div>
<div class="rh g" style="left:253px;top:899px;width:430px;height:21px"><svg class="pm" style="left:4px;top:5px" width="9" height="9" viewBox="0 0 9 9"><rect x="0.5" y="0.5" width="8" height="8" rx="1" fill="#fbfbfb" stroke="#8e8e8e"/><path d="M2 4.5H7M4.5 2V7" stroke="#555" stroke-width="1"/></svg><span style="left:17px;letter-spacing:0.4px;">ITAU 06867-4</span></div>
<div class="rh g" style="left:253px;top:920px;width:430px;height:21px"><svg class="pm" style="left:4px;top:5px" width="9" height="9" viewBox="0 0 9 9"><rect x="0.5" y="0.5" width="8" height="8" rx="1" fill="#fbfbfb" stroke="#8e8e8e"/><path d="M2 4.5H7M4.5 2V7" stroke="#555" stroke-width="1"/></svg><span style="left:17px;letter-spacing:-0.42px;">PROC.JUDICIAL ANDAME</span></div>
<div class="rh g" style="left:253px;top:941px;width:430px;height:21px"><svg class="pm" style="left:4px;top:5px" width="9" height="9" viewBox="0 0 9 9"><rect x="0.5" y="0.5" width="8" height="8" rx="1" fill="#fbfbfb" stroke="#8e8e8e"/><path d="M2 4.5H7M4.5 2V7" stroke="#555" stroke-width="1"/></svg><span style="left:17px;letter-spacing:-0.35px;">PROTESTADO</span></div>
<div class="rh g" style="left:253px;top:962px;width:430px;height:21px"><svg class="pm" style="left:4px;top:5px" width="9" height="9" viewBox="0 0 9 9"><rect x="0.5" y="0.5" width="8" height="8" rx="1" fill="#fbfbfb" stroke="#8e8e8e"/><path d="M2 4.5H7M4.5 2V7" stroke="#555" stroke-width="1"/></svg><span style="left:17px;letter-spacing:-0.62px;">RECUPERAÇAO JUDICIAL</span></div>
<div class="rh g" style="left:113px;top:983px;width:570px;height:21px"><span style="left:4px;letter-spacing:0.5px;">43 Total</span></div>
  <div class="vline" style="left:683px;top:248px;width:1px;height:757px"></div>
  <div class="vline" style="left:14px;top:290px;width:670px;height:1px"></div>
  <div class="vline" style="left:683px;top:248px;width:1220px;height:1px"></div>
  <div class="vline" style="left:1902px;top:248px;width:1px;height:775px;background:#fdfdfd"></div>
  <div class="vline" style="left:14px;top:1004px;width:670px;height:1px;background:#f6f6f6"></div>
  <div class="vline" style="left:1885px;top:1005px;width:17px;height:18px;background:#f7f7f7"></div>
  <div class="vline" style="left:15px;top:1029px;width:1890px;height:1px;background:#a6a6a6"></div>
  <div class="vline" style="left:1904px;top:217px;width:5px;height:813px;background:#f2f1ef"></div>
  <div class="vline" style="left:1909px;top:217px;width:1px;height:817px;background:#9fb4a8"></div>
  <div class="vline" style="left:1910px;top:56px;width:1px;height:978px;background:#c0dfcd"></div>
  <div class="vline" style="left:11px;top:64px;width:1px;height:966px;background:#a3b0a9"></div>
  <div id="vs"></div>
  <div class="sbtn" style="left:1886px;top:290px;width:16px;height:14px"></div>
  <div class="sbtn" style="left:1886px;top:991px;width:16px;height:14px"></div>
  <svg class="abs" style="left:1886px;top:290px" width="16" height="14" viewBox="0 0 16 14"><path d="M4 9l4-4 4 4" fill="none" stroke="#1f5fb0" stroke-width="2.200"/></svg>
  <svg class="abs" style="left:1886px;top:991px" width="16" height="14" viewBox="0 0 16 14"><path d="M4 5l4 4 4-4" fill="none" stroke="#1f5fb0" stroke-width="2.200"/></svg>
  <div class="vth"></div>
  <svg class="abs" style="left:1889px;top:359px" width="9" height="8" viewBox="0 0 9 8"><path d="M1 1.500h7M1 4h7M1 6.500h7" stroke="#3f7fc4" stroke-width="1"/></svg>
  <div id="hs"></div>
  <div class="sbtn" style="left:684px;top:1006px;width:14px;height:15px"></div>
  <div class="sbtn" style="left:1871px;top:1006px;width:14px;height:15px"></div>
  <svg class="abs" style="left:684px;top:1006px" width="14" height="15" viewBox="0 0 14 15"><path d="M9 3.500l-4 4 4 4" fill="none" stroke="#1f5fb0" stroke-width="2.200"/></svg>
  <svg class="abs" style="left:1871px;top:1006px" width="14" height="15" viewBox="0 0 14 15"><path d="M5 3.500l4 4-4 4" fill="none" stroke="#1f5fb0" stroke-width="2.200"/></svg>
  <div class="hth"></div>
  <svg class="abs" style="left:1208px;top:1009px" width="8" height="9" viewBox="0 0 8 9"><path d="M1.500 1v7M4 1v7M6.500 1v7" stroke="#3f7fc4" stroke-width="1"/></svg>
</div></div>
</body>
</html>
